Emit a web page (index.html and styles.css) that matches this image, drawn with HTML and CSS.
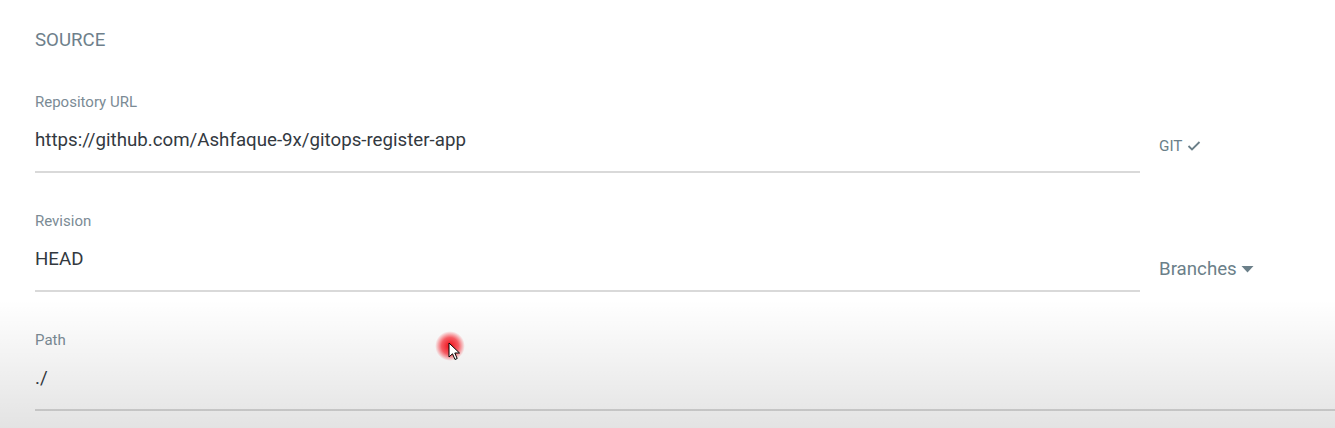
FILE: index.html
```html
<!DOCTYPE html>
<html lang="en">
<head>
    <meta charset="UTF-8">
    <meta name="viewport" content="width=device-width, initial-scale=1.0">
    <title>Source</title>
    <link rel="stylesheet" href="styles.css">
</head>
<body>
    <div class="panel">
        <div class="section-title">SOURCE</div>

        <div class="row">
            <div class="field">
                <label class="field-label">Repository URL</label>
                <div class="field-value">https://github.com/Ashfaque-9x/gitops-register-app</div>
            </div>
            <div class="side side-git">
                GIT
                <svg class="check" width="14" height="12" viewBox="0 0 14 12">
                    <path d="M1.5 6 L5 9.5 L12.5 2" fill="none" stroke="#6b7f89" stroke-width="1.8"/>
                </svg>
            </div>
        </div>

        <div class="row">
            <div class="field">
                <label class="field-label">Revision</label>
                <div class="field-value">HEAD</div>
            </div>
            <div class="side side-branches">
                Branches
                <svg class="caret" width="13" height="8" viewBox="0 0 13 8">
                    <path d="M0.5 1 L12.5 1 L6.5 7.5 Z" fill="#6b7f89"/>
                </svg>
            </div>
        </div>

        <div class="row">
            <div class="field field-full">
                <label class="field-label">Path</label>
                <div class="field-value">./</div>
            </div>
        </div>
    </div>

    <div class="fade"></div>

    <div class="pointer">
        <div class="click-dot"></div>
        <svg class="arrow" width="14" height="20" viewBox="0 0 14 20">
            <path d="M1 1 L1 15 L4.5 11.8 L7 17.5 L9.2 16.5 L6.8 11 L11.5 11 Z" fill="#fff" stroke="#000" stroke-width="1"/>
        </svg>
    </div>
</body>
</html>
```

FILE: styles.css
```css
body {
  margin: 0;
  background: #fff;
  font-family: Roboto, "Liberation Sans", sans-serif;
  overflow: hidden;
}

.panel {
  padding: 29px 0 0 35px;
}

.section-title {
  font-size: 18.7px;
  line-height: 22px;
  color: #6e7f8b;
  margin-bottom: 43px;
}

.row {
  display: flex;
  margin-bottom: 40px;
}

.row:last-child {
  margin-bottom: 0;
}

.field {
  width: 1105px;
  border-bottom: 2px solid #d9d9d9;
  padding-bottom: 19px;
}

.field-full {
  flex: 1;
}

.field-label {
  display: block;
  font-size: 15px;
  line-height: 16px;
  color: #7b8b95;
  margin-bottom: 18px;
}

.field-value {
  font-size: 18.7px;
  line-height: 24px;
  color: #33393f;
}

.side {
  padding-left: 19px;
  color: #6b7f89;
  display: flex;
  align-items: center;
  gap: 4px;
  align-self: flex-start;
}

.side-git {
  margin-top: 42px;
  font-size: 15.3px;
  line-height: 20px;
}

.side-branches {
  margin-top: 45px;
  font-size: 18.7px;
  line-height: 22px;
}

.fade {
  position: absolute;
  left: 0;
  right: 0;
  top: 300px;
  height: 128px;
  background: linear-gradient(rgba(0, 0, 0, 0), rgba(0, 0, 0, 0.11));
  pointer-events: none;
}

.pointer {
  position: absolute;
  left: 435px;
  top: 331px;
  width: 30px;
  height: 30px;
}

.click-dot {
  width: 30px;
  height: 30px;
  border-radius: 50%;
  background: radial-gradient(circle, rgba(240, 10, 20, 1) 0%, rgba(245, 40, 50, 0.75) 40%, rgba(255, 110, 110, 0) 70%);
}

.arrow {
  position: absolute;
  left: 13px;
  top: 11px;
}
```
